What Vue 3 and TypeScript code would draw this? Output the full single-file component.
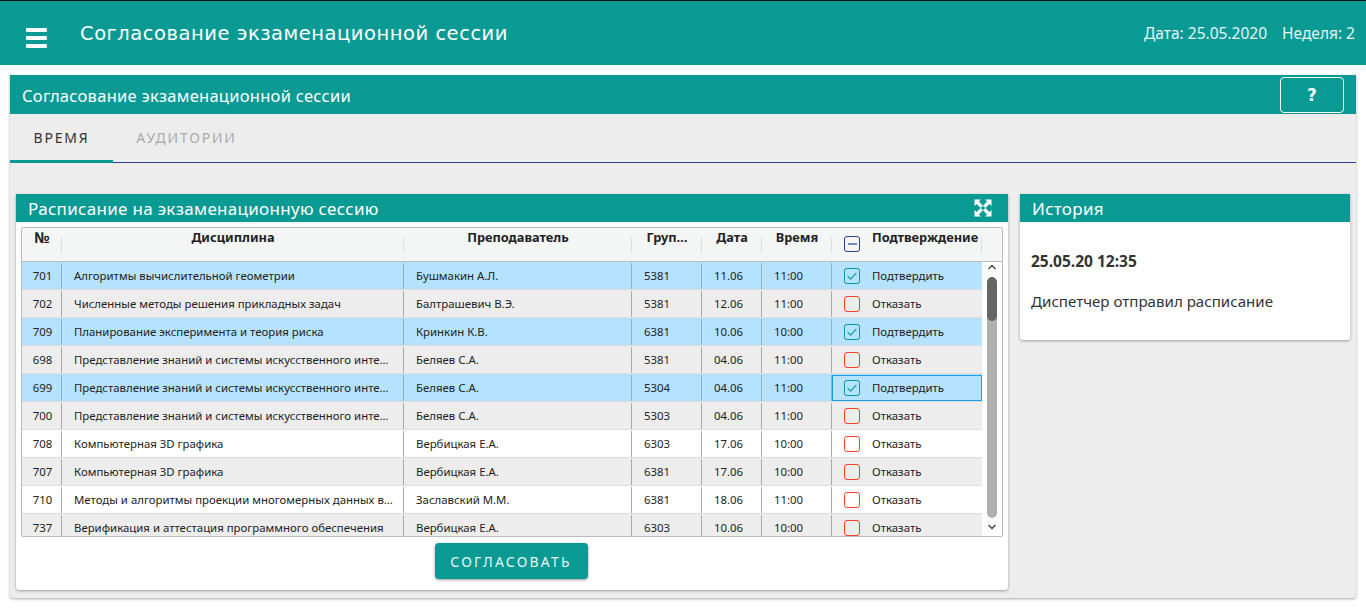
<script setup lang="ts">
interface Row { id: number; name: string; teacher: string; group: number; date: string; time: string; ok: boolean; focus?: boolean }
const longName = 'Представление знаний и системы искусственного инте…'
const rows: Row[] = [
  { id: 701, name: 'Алгоритмы вычислительной геометрии', teacher: 'Бушмакин А.Л.', group: 5381, date: '11.06', time: '11:00', ok: true },
  { id: 702, name: 'Численные методы решения прикладных задач', teacher: 'Балтрашевич В.Э.', group: 5381, date: '12.06', time: '11:00', ok: false },
  { id: 709, name: 'Планирование эксперимента и теория риска', teacher: 'Кринкин К.В.', group: 6381, date: '10.06', time: '10:00', ok: true },
  { id: 698, name: longName, teacher: 'Беляев С.А.', group: 5381, date: '04.06', time: '11:00', ok: false },
  { id: 699, name: longName, teacher: 'Беляев С.А.', group: 5304, date: '04.06', time: '11:00', ok: true, focus: true },
  { id: 700, name: longName, teacher: 'Беляев С.А.', group: 5303, date: '04.06', time: '11:00', ok: false },
  { id: 708, name: 'Компьютерная 3D графика', teacher: 'Вербицкая Е.А.', group: 6303, date: '17.06', time: '10:00', ok: false },
  { id: 707, name: 'Компьютерная 3D графика', teacher: 'Вербицкая Е.А.', group: 6381, date: '17.06', time: '10:00', ok: false },
  { id: 710, name: 'Методы и алгоритмы проекции многомерных данных в…', teacher: 'Заславский М.М.', group: 6381, date: '18.06', time: '11:00', ok: false },
  { id: 737, name: 'Верификация и аттестация программного обеспечения', teacher: 'Вербицкая Е.А.', group: 6303, date: '10.06', time: '10:00', ok: false },
]
const rowClass = (r: Row, i: number) => ({ selected: r.ok, odd: !r.ok && i % 2 === 1, white: !r.ok && i % 2 === 0 })
</script>

<template>
  <div class="page">
    <header class="topbar">
      <div class="burger"><span></span><span></span><span></span></div>
      <h1 class="app-title">Согласование экзаменационной сессии</h1>
      <div class="meta"><span>Дата: 25.05.2020</span><span>Неделя: 2</span></div>
    </header>
    <main class="card">
      <div class="card-head">
        <span class="card-title">Согласование экзаменационной сессии</span>
        <button class="help">?</button>
      </div>
      <nav class="tabs">
        <div class="tab active">ВРЕМЯ</div>
        <div class="tab">АУДИТОРИИ</div>
      </nav>
      <div class="content">
        <section class="panel schedule">
          <div class="panel-head">
            <span>Расписание на экзаменационную сессию</span>
            <svg class="expand" width="18" height="18" viewBox="0 0 18 18" fill="#fff">
              <path d="M0.5 0.5h6.5L4.9 2.6 9 6.7 6.7 9 2.6 4.9 0.5 7z" />
              <path d="M17.5 0.5V7l-2.1-2.1L11.3 9 9 6.7l4.1-4.1L11 0.5z" />
              <path d="M0.5 17.5V11l2.1 2.1L6.7 9 9 11.3l-4.1 4.1L7 17.5z" />
              <path d="M17.5 17.5H11l2.1-2.1L9 11.3 11.3 9l4.1 4.1L17.5 11z" />
            </svg>
          </div>
          <div class="table">
            <div class="thead">
              <div class="th c-id"><span class="num">№</span></div>
              <div class="th c-name">Дисциплина</div>
              <div class="th c-teacher">Преподаватель</div>
              <div class="th c-group">Груп…</div>
              <div class="th c-date">Дата</div>
              <div class="th c-time">Время</div>
              <div class="th c-confirm">
                <span class="box box-all"><i></i></span>
                <span>Подтверждение</span>
              </div>
            </div>
            <div class="tbody">
              <div class="rows">
                <div v-for="(r, i) in rows" :key="r.id" class="tr" :class="rowClass(r, i)">
                  <div class="td c-id center">{{ r.id }}</div>
                  <div class="td c-name">{{ r.name }}</div>
                  <div class="td c-teacher">{{ r.teacher }}</div>
                  <div class="td c-group">{{ r.group }}</div>
                  <div class="td c-date">{{ r.date }}</div>
                  <div class="td c-time">{{ r.time }}</div>
                  <div class="td c-confirm" :class="{ focused: r.focus }">
                    <span class="box" :class="r.ok ? 'box-ok' : 'box-no'">
                      <svg v-if="r.ok" width="14" height="14" viewBox="0 0 14 14" fill="none" stroke="#0a9a94" stroke-width="1.1">
                        <path d="M2.6 7.2l3 3 5.8-6.4" />
                      </svg>
                    </span>
                    <span class="verdict">{{ r.ok ? 'Подтвердить' : 'Отказать' }}</span>
                  </div>
                </div>
              </div>
              <div class="scrollbar">
                <svg class="arrow" width="10" height="6" viewBox="0 0 10 6" fill="none" stroke="#444" stroke-width="1.4"><path d="M1.5 5L5 1.5 8.5 5" /></svg>
                <div class="track"><div class="thumb"></div></div>
                <svg class="arrow" width="10" height="6" viewBox="0 0 10 6" fill="none" stroke="#444" stroke-width="1.4"><path d="M1.5 1L5 4.5 8.5 1" /></svg>
              </div>
            </div>
          </div>
          <div class="actions"><button class="agree">СОГЛАСОВАТЬ</button></div>
        </section>
        <section class="panel history">
          <div class="panel-head"><span>История</span></div>
          <div class="history-body">
            <div class="stamp">25.05.20 12:35</div>
            <div class="event">Диспетчер отправил расписание</div>
          </div>
        </section>
      </div>
    </main>
  </div>
</template>

<style>
html, body { margin: 0; background: #fff; overflow: hidden; }
</style>

<style scoped>
.page { width: 1366px; height: 609px; font-family: "Noto Sans", "Open Sans", sans-serif; color: #222; box-sizing: border-box; border-top: 1px solid #111; }
.topbar { height: 64px; background: #0a9a94; color: #fff; display: flex; align-items: center; box-sizing: border-box; padding: 0 11px 0 26px; }
.burger { width: 21px; display: flex; flex-direction: column; gap: 4px; margin-top: 10px; }
.burger span { height: 4px; background: #fff; border-radius: 1px; }
.app-title { margin: 0 0 0 33px; font: 400 19.5px "DejaVu Sans", sans-serif; letter-spacing: 0.52px; flex: 1; }
.meta { display: flex; gap: 15px; font-size: 15.5px; color: #e4f5f4; }
.card { margin: 10px 10px 0; height: 523px; background: #ededed; box-shadow: 0 1px 3px rgba(0,0,0,.35); border-radius: 0 0 3px 3px; }
.card-head { height: 39px; background: #0a9a94; color: #fff; display: flex; align-items: center; justify-content: space-between; box-sizing: border-box; padding: 0 12px; font-size: 16.5px; letter-spacing: 0.27px; }
.card-title { margin-top: 2px; }
.help { width: 64px; height: 36px; box-sizing: border-box; background: transparent; border: 1px solid #fff; border-radius: 4px; color: #fff; font: 700 17px "DejaVu Sans", sans-serif; padding: 0; }
.tabs { height: 49px; display: flex; box-sizing: border-box; border-bottom: 1px solid #2a3f9c; }
.tab { width: 103px; text-align: center; line-height: 48px; font-size: 14px; letter-spacing: 1.8px; color: #aaa; box-sizing: border-box; height: 49px; }
.tab + .tab { width: 147px; }
.tab.active { color: #333; border-bottom: 3px solid #0a9a94; }
.content { display: flex; gap: 12px; padding: 31px 6px 0; align-items: flex-start; }
.panel { background: #fff; box-shadow: 0 1px 3px rgba(0,0,0,.35); border-radius: 0 0 3px 3px; }
.schedule { width: 992px; height: 396px; }
.history { width: 330px; height: 146px; }
.panel-head { height: 28px; background: #0a9a94; color: #fff; display: flex; align-items: center; justify-content: space-between; padding: 0 16px 0 12px; font-size: 17px; letter-spacing: 0.3px; }
.expand { display: block; }
.table { margin: 5px 5px 0; height: 310px; box-sizing: border-box; border: 1px solid #bbb; border-radius: 2px; overflow: hidden; background: #fff; }
.thead { height: 34px; display: flex; background: #f4f6f6; box-sizing: border-box; border-bottom: 1px solid #bbb; padding-right: 20px; }
.th { font-size: 12.8px; font-weight: 700; text-align: center; color: #222; line-height: 18px; box-sizing: border-box; position: relative; white-space: nowrap; }
.th::after { content: ""; position: absolute; right: 0; top: 9px; height: 16px; width: 1px; background: #ddd; }
.num { font-size: 15px; }
.c-id { width: 40px; flex: none; }
.c-name { width: 342px; flex: none; }
.c-teacher { width: 228px; flex: none; }
.c-group { width: 70px; flex: none; }
.c-date { width: 60px; flex: none; }
.c-time { width: 70px; flex: none; }
.c-confirm { width: 150px; flex: none; }
.th.c-confirm { display: flex; justify-content: flex-start; }
.tbody { display: flex; height: 274px; overflow: hidden; }
.rows { flex: none; width: 960px; }
.tr { display: flex; height: 28px; box-sizing: border-box; border-bottom: 1px solid #ddd; font-size: 11.4px; }
.tr.selected { background: #b5e2fe; }
.tr.odd { background: #ededed; }
.tr.white { background: #fff; }
.td { box-sizing: border-box; padding: 0 12px; line-height: 25px; white-space: nowrap; overflow: hidden; position: relative; margin: 1px 0 0; color: #222; }
.td::after { content: ""; position: absolute; right: 0; top: 0; bottom: 0; width: 1px; background: #aaa; }
.td.center { padding: 0 0 0 1px; text-align: center; }
.td.c-confirm { display: flex; align-items: center; padding: 0; font-size: 11.4px; }
.td.c-confirm::after { display: none; }
.td.focused { outline: 1px solid #1a9ae0; outline-offset: -1px; }
.verdict { margin-bottom: 2px; }
.box { width: 16px; height: 16px; flex: none; box-sizing: border-box; border-radius: 3px; border: 1.3px solid; margin: 0 12px 0 12px; display: flex; align-items: center; justify-content: center; }
.box-ok { border-color: #0a9a94; }
.box-no { border-color: #f0451e; }
.box-all { border-color: #2a3f9c; margin-top: 8px; }
.box-all i { width: 9px; height: 2px; background: #7b88c4; }
.scrollbar { width: 20px; flex: none; display: flex; flex-direction: column; align-items: center; padding: 2px 0 6px; box-sizing: border-box; background: #fff; }
.arrow { flex: none; display: block; }
.track { flex: 1; width: 10px; margin: 7px 0 6px; background: #b0b0b0; border-radius: 5px; overflow: hidden; }
.thumb { height: 44px; background: #666; border-radius: 5px; }
.actions { display: flex; justify-content: center; padding: 6px 2px 0 0; }
.agree { width: 153px; height: 36px; background: #0a9a94; color: #e4f5f4; border: none; border-radius: 4px; font: 400 14px "Noto Sans", sans-serif; letter-spacing: 2.2px; box-shadow: 0 1px 3px rgba(0,0,0,.4); padding: 0; }
.history-body { padding: 0 11px; color: #333; }
.stamp { font-size: 15.5px; font-weight: 700; margin-top: 29px; line-height: 20px; }
.event { font-size: 15.1px; margin-top: 20px; line-height: 20px; }
</style>
